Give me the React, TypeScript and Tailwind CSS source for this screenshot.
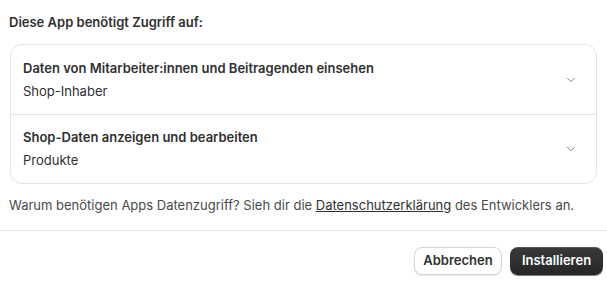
import { ChevronDown } from 'lucide-react';

const permissions = [
    { title: 'Daten von Mitarbeiter:innen und Beitragenden einsehen', detail: 'Shop-Inhaber' },
    { title: 'Shop-Daten anzeigen und bearbeiten', detail: 'Produkte' },
];

const App = () => {
    return (
        <div className="w-[607px] h-[287px] bg-white text-[#303030] font-['Inter',sans-serif] text-[13px]">
            <div className="px-[10px] pt-[13px]">
                <h2 className="-ml-px font-semibold leading-[18px]">Diese App benötigt Zugriff auf:</h2>

                {/* Permission list */}
                <div className="mt-[13px] border border-[#e3e3e3] rounded-[12px]">
                    {permissions.map((p, i) => (
                        <div
                            key={p.title}
                            className={`flex items-center justify-between pl-[12px] pr-[18px] h-[69px] ${i > 0 ? 'border-t border-[#e3e3e3]' : ''}`}
                        >
                            <div className="flex flex-col gap-[5px] -mt-[1px]">
                                <span className="font-semibold leading-[18px]">{p.title}</span>
                                <span className="leading-[18px]">{p.detail}</span>
                            </div>
                            <ChevronDown className="w-[14px] h-[14px] text-[#7a7a7a]" strokeWidth={1.7} />
                        </div>
                    ))}
                </div>

                <p className="-ml-px mt-[12px] leading-[18px] text-[#4a4a4a]">
                    Warum benötigen Apps Datenzugriff? Sieh dir die{' '}
                    <a href="#" className="underline text-[#303030]">Datenschutzerklärung</a> des Entwicklers an.
                </p>
            </div>

            <div className="mt-[16px] border-t border-[#e3e3e3] flex justify-end gap-[8px] pt-[16px] pr-[4px]">
                <button className="w-[88px] h-[28px] flex items-center justify-center rounded-[8px] border border-[#d4d4d4] bg-white font-semibold text-[#303030] shadow-[0_1px_0_rgba(0,0,0,0.08)]">
                    Abbrechen
                </button>
                <button className="w-[93px] h-[28px] flex items-center justify-center rounded-[8px] bg-gradient-to-b from-[#3a3a3a] to-[#262626] text-white font-semibold shadow-[0_1px_0_rgba(0,0,0,0.5),inset_0_1px_0_rgba(255,255,255,0.15)]">
                    Installieren
                </button>
            </div>
        </div>
    );
};

export default App;
